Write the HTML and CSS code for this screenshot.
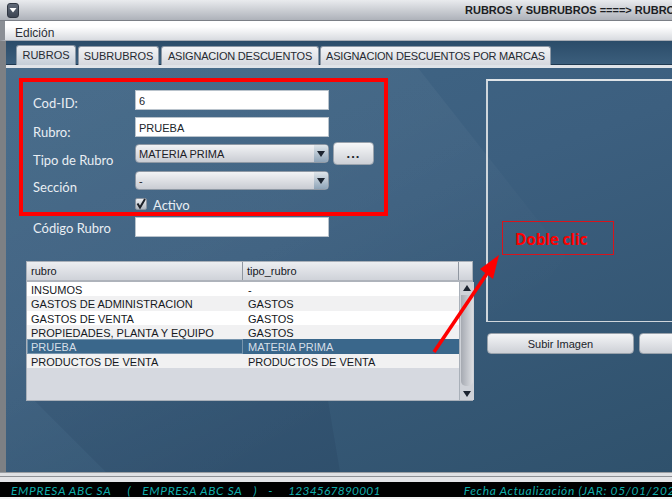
FILE: index.html
```html
<!DOCTYPE html>
<html lang="es">
<head>
<meta charset="utf-8">
<title>Rubros y subrubros</title>
<link rel="stylesheet" href="styles.css">
</head>
<body>
<div class="window">
  <header class="titlebar">
    <button class="sysbtn"><svg width="10" height="6" viewBox="0 0 10 6"><path d="M1.5 1h7L5 5.5z" fill="#fff"/></svg></button>
    <span class="title">RUBROS Y SUBRUBROS ====&gt; RUBRO ACTUAL</span>
  </header>
  <nav class="menubar"><span>Edición</span></nav>
  <main class="desk">
    <div class="wedge"></div>
    <div class="shade"></div>
    <div class="tabs">
      <div class="tab active">RUBROS</div>
      <div class="tab t2">SUBRUBROS</div>
      <div class="tab t3">ASIGNACION DESCUENTOS</div>
      <div class="tab t4">ASIGNACION DESCUENTOS POR MARCAS</div>
    </div>
    <div class="workspace">
      <section class="leftcol">
        <div class="redbox">
          <div class="row r1"><label>Cod-ID:</label><div class="field">6</div></div>
          <div class="row r2"><label>Rubro:</label><div class="field">PRUEBA</div></div>
          <div class="row r3"><label>Tipo de Rubro</label>
            <div class="combo"><span class="val">MATERIA PRIMA</span><span class="arrow"><svg width="10" height="8" viewBox="0 0 10 8"><path d="M1 1h8L5 7z" fill="#1c2430"/></svg></span></div>
            <button class="dots">...</button>
          </div>
          <div class="row r4"><label>Sección</label>
            <div class="combo c2"><span class="val">-</span><span class="arrow"><svg width="10" height="8" viewBox="0 0 10 8"><path d="M1 1h8L5 7z" fill="#1c2430"/></svg></span></div>
          </div>
          <div class="row r5"><label></label>
            <span class="check"><svg width="12" height="12" viewBox="0 0 12 12"><path d="M2.5 5.5l2.5 4L10 1" fill="none" stroke="#1b2028" stroke-width="2"/></svg></span><span class="activo">Activo</span>
          </div>
        </div>
        <div class="row codigo"><label>Código Rubro</label><div class="field"></div></div>
        <div class="grid">
          <div class="ghead"><div class="c-a">rubro</div><div class="c-b">tipo_rubro</div><div class="c-c"></div></div>
          <div class="gbody">
            <div class="rows">
              <div class="tr"><div class="c-a">INSUMOS</div><div class="c-b">-</div></div>
              <div class="tr alt"><div class="c-a">GASTOS DE ADMINISTRACION</div><div class="c-b">GASTOS</div></div>
              <div class="tr"><div class="c-a">GASTOS DE VENTA</div><div class="c-b">GASTOS</div></div>
              <div class="tr alt"><div class="c-a">PROPIEDADES, PLANTA Y EQUIPO</div><div class="c-b">GASTOS</div></div>
              <div class="tr sel"><div class="c-a">PRUEBA</div><div class="c-b">MATERIA PRIMA</div></div>
              <div class="tr alt"><div class="c-a">PRODUCTOS DE VENTA</div><div class="c-b">PRODUCTOS DE VENTA</div></div>
            </div>
            <div class="scroll">
              <svg width="14" height="13" viewBox="0 0 14 13"><path d="M3 9h8L7 3z" fill="#1c2430"/></svg>
              <div class="thumb"></div>
              <svg width="14" height="13" viewBox="0 0 14 13"><path d="M3 4h8L7 10z" fill="#1c2430"/></svg>
            </div>
          </div>
        </div>
      </section>
      <section class="rightcol">
        <div class="imgpanel"></div>
        <div class="imgbtns"><button class="imgbtn">Subir Imagen</button><button class="imgbtn"></button></div>
      </section>
    </div>
    <div class="callout">Doble clic</div>
    <svg class="redarrow" width="80" height="110" viewBox="0 0 80 110"><path d="M4 104L58 24" stroke="#f00" stroke-width="3.6" fill="none"/><path d="M69 7L50 21L63 31z" fill="#f00"/></svg>
  </main>
  <div class="band"></div>
  <footer class="status">
    <span class="s1">EMPRESA ABC SA</span><span class="s2">(</span><span class="s3">EMPRESA ABC SA</span><span class="s4">)</span><span class="s5">-</span><span class="s6">1234567890001</span><span class="s7">Fecha Actualización (JAR: 05/01/2024)</span>
  </footer>
</div>
</body>
</html>
```

FILE: styles.css
```css
* { box-sizing: border-box; }
html, body { margin: 0; padding: 0; }
body { width: 672px; height: 499px; overflow: hidden; background: #fff; font-family: "Liberation Sans", Arial, sans-serif; }
button { font-family: inherit; padding: 0; }
.window { width: 672px; height: 499px; display: flex; flex-direction: column; overflow: hidden; }

.titlebar { height: 21px; flex: none; display: flex; align-items: center; padding-left: 7px; background: linear-gradient(#e9ebee, #aeb2ba); border-bottom: 1px solid #7b7f86; white-space: nowrap; }
.sysbtn { width: 16px; height: 15px; border: 1px solid #2f3642; border-radius: 3px; background: linear-gradient(#5f6877, #3d4553); display: flex; align-items: center; justify-content: center; }
.title { margin-left: 446px; font-size: 11px; font-weight: bold; color: #1b1d22; }

.menubar { height: 20px; flex: none; padding: 5px 0 0 10px; font-size: 12px; line-height: 14px; color: #2b2f36; background: linear-gradient(#fff 30%, #d8dbe0); border-bottom: 1px solid #a8adb5; border-left: 5px solid #8b8f95; }

.desk { flex: 1; position: relative; min-height: 0; border-left: 6px solid #7d8084;
  background: linear-gradient(160deg, #416787 0%, #3c5f7f 45%, #2f516c 100%); overflow: hidden; }
.wedge { position: absolute; inset: 0; clip-path: polygon(0 27px, 412px 27px, 560px 215px, 400px 431px, 0 431px); background: linear-gradient(150deg, rgba(255,255,255,.05), rgba(255,255,255,.035) 40%, rgba(255,255,255,0) 70%); }
.shade { position: absolute; inset: 0; clip-path: polygon(29px 360px, 322px 360px, 334px 431px, 100px 431px); background: rgba(0,20,40,.07); }

.tabs { position: relative; height: 27px; display: flex; align-items: flex-end; padding: 5px 0 0 10px; border-bottom: 3px solid #dfe3e8; box-shadow: inset 0 -1px 0 #1f3950; background: linear-gradient(#2b4c69, #3c5f7d); }
.tab { height: 19px; font-size: 11px; line-height: 19px; color: #262a31; background: linear-gradient(#f3f4f6, #d5d8de); border: 1px solid #8d98a5; border-bottom: 0; border-radius: 3px 3px 0 0; margin-right: 2px; text-align: center; white-space: nowrap; }
.tab.active { width: 60px; height: 20px; background: linear-gradient(#eceef1, #c4cdd7); }
.t2 { width: 81px; }
.t3 { width: 158px; margin-right: 1px; letter-spacing: -.2px; }
.t4 { width: 231px; letter-spacing: -.2px; }

.workspace { position: relative; display: flex; align-items: flex-start; padding: 10px 0 0 13px; }
.leftcol { width: 454px; flex: none; }
.redbox { width: 369px; height: 137.5px; border: 4px solid #f00; padding: 8px 0 0 10px; }
.row { display: flex; align-items: center; }
.row label { width: 102px; flex: none; font-family: "Lato", sans-serif; font-size: 13px; line-height: 16px; color: #e9eef3; }
.field { width: 194px; height: 20px; background: #fff; border: 1px solid #b9c3cc; padding-left: 3px; font-size: 11px; line-height: 20px; color: #20242a; }
.r1 { height: 20px; }
.r2 { height: 20px; margin-top: 7px; }
.r3 { height: 19px; margin-top: 7px; }
.r4 { height: 19px; margin-top: 8px; }
.r5 { height: 12px; margin-top: 8px; }
.r1 label { padding-top: 5px; }
.r2 label { padding-top: 10px; }
.r3 label { padding-top: 13px; }
.r4 label { padding-top: 13px; }
.combo { width: 194px; height: 18.5px; display: flex; background: linear-gradient(#f2f3f5, #c9ccd3); border: 1px solid #8f99a5; border-radius: 4px; font-size: 11px; line-height: 18px; color: #1d2026; }
.val { flex: 1; padding-left: 3px; }
.arrow { width: 14px; display: flex; align-items: center; justify-content: center; background: linear-gradient(#dfe5ea, #8ea4b8); border-radius: 0 3px 3px 0; }
.dots { width: 41px; height: 23px; margin-left: 4px; background: linear-gradient(#f7f8f9, #cdd0d6); border: 1px solid #9aa3ad; border-radius: 4px; color: #20242a; font-size: 13px; font-weight: bold; letter-spacing: 1px; line-height: 20px; }
.check { width: 12px; height: 12px; display: block; background: linear-gradient(#eef0f3, #aeb6c0); border: 1px solid #8a94a0; border-radius: 2px; line-height: 0; }
.check svg { margin: -1px 0 0 -1px; }
.activo { margin: 2px 0 0 6px; font-family: "Lato", sans-serif; font-size: 13px; color: #e9eef3; }
.codigo { height: 20px; margin: 1.5px 0 0 14px; }
.codigo label { padding-top: 2px; }

.grid { width: 447px; height: 140px; margin: 24px 0 0 7px; background: #d6d9e0; border: 1px solid #a9b0b9; display: flex; flex-direction: column; font-size: 11px; color: #15181d; }
.ghead { height: 20px; flex: none; display: flex; line-height: 18px; background: linear-gradient(#eceef1, #cfd2d9); border-bottom: 2px solid #aeb3bb; }
.ghead .c-a { width: 216px; padding-left: 4px; border-right: 1px solid #8f96a0; }
.ghead .c-b { width: 216px; padding-left: 4px; border-right: 1px solid #8f96a0; }
.ghead .c-c { flex: 1; }
.gbody { flex: 1; display: flex; min-height: 0; }
.rows { width: 432px; flex: none; }
.tr { height: 14.34px; display: flex; line-height: 16px; background: #fff; }
.tr.alt { background: #f1f1f2; }
.tr .c-a { width: 216px; padding-left: 4px; white-space: nowrap; }
.tr .c-b { padding-left: 5px; white-space: nowrap; }
.tr.sel { background: #3a678b; color: #d5dfe8; }
.tr.sel .c-a { box-shadow: inset 0 0 0 1px #7795ae; }
.scroll { flex: 1; display: flex; flex-direction: column; background: #cfd2d8; border-left: 1px solid #a9b0b9; }
.thumb { flex: 1; margin: 0 1px 1px; background: linear-gradient(90deg, #a6aab2, #dcdee2); border-radius: 0 0 5px 5px; }

.rightcol { margin-left: 13px; flex: none; width: 300px; }
.imgpanel { width: 300px; height: 243px; margin-top: 1px; border: 1px solid #cfd6dc; border-top: 2px solid #dfe4e8; border-left: 2px solid #cfd6dc; }
.imgbtns { display: flex; gap: 5px; margin: 11px 0 0 1px; }
.imgbtn { width: 149px; height: 21px; background: linear-gradient(#f4f5f7, #cdd0d6); border: 1px solid #98a1ab; border-radius: 4px; font-size: 11px; color: #20242a; }

.callout { position: absolute; left: 496px; top: 180px; width: 112px; height: 34px; border: 1px solid #d8141c; padding-left: 12px; font-family: "Open Sans", sans-serif; font-weight: bold; font-size: 15.5px; line-height: 34px; letter-spacing: -.2px; color: #f00; }
.redarrow { position: absolute; left: 424px; top: 207px; }

.band { height: 10px; flex: none; background: linear-gradient(#9a9ea3 0 1px, #dfe1e4 1px 4px, #8d9095 4px 5px, #e4e5e8 5px); }
.status { height: 17px; flex: none; display: flex; background: #000; border-bottom: 2px solid #f2f2f2; padding-left: 11px; font-family: "Lato", sans-serif; font-style: italic; font-size: 12px; line-height: 18px; color: #10aeac; white-space: nowrap; letter-spacing: .65px; }
.s2 { margin-left: 16px; }
.s3 { margin-left: 11px; }
.s4 { margin-left: 11px; }
.s5 { margin-left: 11px; }
.s6 { margin-left: 15px; letter-spacing: .2px; }
.s7 { margin-left: 83px; }
```
